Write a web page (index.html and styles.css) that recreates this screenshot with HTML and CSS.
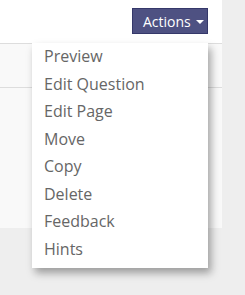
FILE: index.html
```html
<!DOCTYPE html>
<html lang="en">

<head>
    <meta charset="UTF-8">
    <meta
        name="viewport"
        content="width=device-width, initial-scale=1.0"
    >
    <title>Question Actions</title>
    <link rel="stylesheet" href="styles.css">
</head>

<body>
    <section class="panel">
        <div class="panel-header">
            <div class="actions">
                <button type="button" class="actions-btn">
                    Actions <span class="caret"></span>
                </button>
                <ul class="actions-menu">
                    <li><a href="#">Preview</a></li>
                    <li><a href="#">Edit Question</a></li>
                    <li><a href="#">Edit Page</a></li>
                    <li><a href="#">Move</a></li>
                    <li><a href="#">Copy</a></li>
                    <li><a href="#">Delete</a></li>
                    <li><a href="#">Feedback</a></li>
                    <li><a href="#">Hints</a></li>
                </ul>
            </div>
        </div>
        <div class="panel-row"></div>
        <div class="panel-body"></div>
    </section>
</body>

</html>
```

FILE: styles.css
```css
html,
body {
    min-height: 100%;
}

body {
    margin: 0;
    padding: 0;
    min-height: 295px;
    background-color: #eeeeee;
    font-family: "Open Sans", "Liberation Sans", sans-serif;
}

.panel {
    width: 222px;
    display: flex;
    flex-direction: column;
    background-color: #f9f9f9;
}

.panel-header {
    height: 44px;
    display: flex;
    justify-content: flex-end;
    align-items: flex-start;
    padding: 8px 14px 0 0;
    box-sizing: border-box;
    background-color: #ffffff;
    border-bottom: 1px solid #dddddd;
}

.panel-row {
    height: 43px;
    border-bottom: 1px solid #dddddd;
}

.panel-body {
    height: 140px;
}

.actions {
    position: relative;
}

.actions-btn {
    display: flex;
    align-items: center;
    gap: 5px;
    width: 76px;
    height: 26px;
    padding: 0 0 0 10px;
    box-sizing: border-box;
    border: 1px solid #35386a;
    border-radius: 0;
    background-color: #4e5182;
    color: #ffffff;
    font-family: inherit;
    font-size: 14px;
}

.caret {
    width: 0;
    height: 0;
    border-left: 4px solid transparent;
    border-right: 4px solid transparent;
    border-top: 4px solid #ffffff;
    margin-top: 2px;
}

.actions-menu {
    position: absolute;
    z-index: 10;
    top: calc(100% + 9px);
    right: 0;
    width: 176px;
    margin: 0;
    padding: 0 0 5px 0;
    list-style: none;
    background-color: #ffffff;
    box-shadow: 3px 5px 8px rgba(0, 0, 0, 0.35);

    & a {
        display: block;
        padding: 0 12px;
        line-height: 27.5px;
        font-size: 16px;
        color: #666666;
        text-decoration: none;
    }
}
```
